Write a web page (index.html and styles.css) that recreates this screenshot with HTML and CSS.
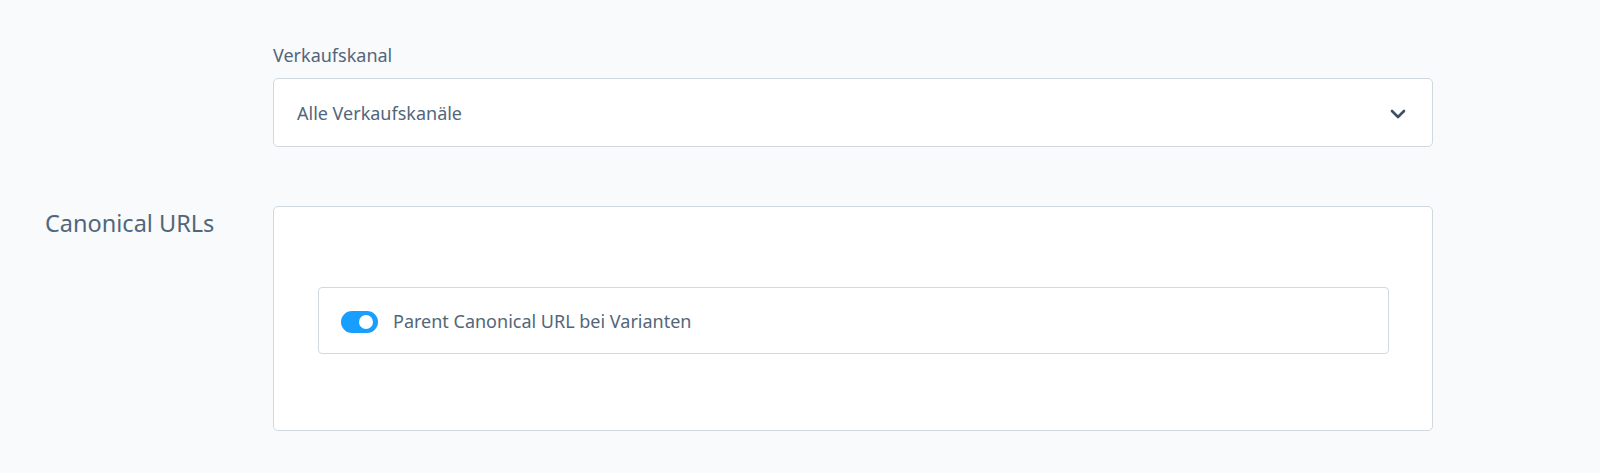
FILE: index.html
```html
<!DOCTYPE html>
<html lang="de">
<head>
    <meta charset="UTF-8">
    <title>SEO Einstellungen</title>
    <link rel="stylesheet" href="styles.css">
</head>
<body>

    <div class="page">
        <div class="row">
            <div class="row-title"></div>
            <div class="row-content">
                <label class="field-label">Verkaufskanal</label>
                <div class="select">
                    <span class="select-value">Alle Verkaufskanäle</span>
                    <svg class="select-arrow" width="16" height="10" viewBox="0 0 16 10">
                        <path d="M2 2 L8 8 L14 2" fill="none" stroke="#3d4f61" stroke-width="2.6" stroke-linecap="round" stroke-linejoin="round"/>
                    </svg>
                </div>
            </div>
        </div>

        <div class="row row-card">
            <div class="row-title">Canonical URLs</div>
            <div class="row-content">
                <div class="card">
                    <div class="switch-field">
                        <span class="switch"><span class="switch-knob"></span></span>
                        <span class="switch-label">Parent Canonical URL bei Varianten</span>
                    </div>
                </div>
            </div>
        </div>
    </div>

</body>
</html>
```

FILE: styles.css
```css
:root {
    --bg-color: #f9fafb;
    --text-color: #52667a;
    --border-color: #d1d9e0;
    --primary: #189eff;
}
body {
    margin: 0;
    background: var(--bg-color);
    color: var(--text-color);
    font-family: "Source Sans Pro", "Noto Sans", Arial, sans-serif;
}
.page {
    padding: 43px 0 0 45px;
    width: 1388px;
}
.row {
    display: flex;
}
.row-title {
    width: 228px;
    flex-shrink: 0;
    font-size: 23.5px;
    line-height: 30px;
    padding-top: 2px;
}
.row-content {
    flex: 1;
}
.row-card {
    margin-top: 59px;
}
.field-label {
    display: block;
    font-size: 18px;
    line-height: 24px;
    margin-bottom: 11px;
}
.select {
    height: 69px;
    box-sizing: border-box;
    background: #fff;
    border: 1px solid var(--border-color);
    border-radius: 5px;
    display: flex;
    align-items: center;
    justify-content: space-between;
    padding: 0 26px 0 23px;
}
.select-value {
    font-size: 18px;
    line-height: 24px;
}
.select-arrow {
    margin-top: 2px;
}
.card {
    height: 225px;
    background: #fff;
    border: 1px solid var(--border-color);
    border-radius: 5px;
    padding: 80px 43px 0 44px;
    box-sizing: border-box;
}
.switch-field {
    height: 67px;
    border: 1px solid var(--border-color);
    border-radius: 4px;
    display: flex;
    align-items: center;
    padding: 3px 0 0 22px;
    box-sizing: border-box;
}
.switch {
    width: 37px;
    height: 22px;
    border-radius: 11px;
    background: var(--primary);
    position: relative;
    margin-right: 15px;
}
.switch-knob {
    position: absolute;
    right: 5px;
    top: 4px;
    width: 14px;
    height: 14px;
    border-radius: 50%;
    background: #fff;
}
.switch-label {
    font-size: 18px;
    line-height: 24px;
    margin-top: -3px;
}
```
